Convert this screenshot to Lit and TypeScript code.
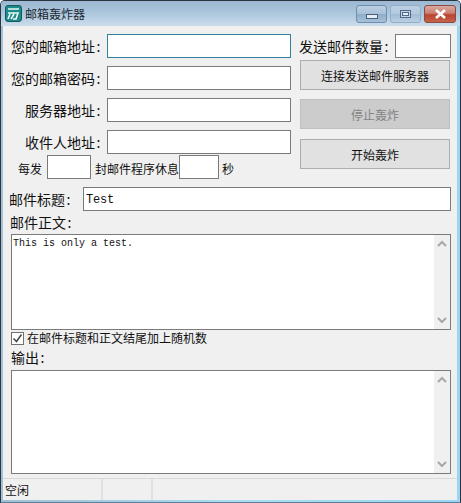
import { LitElement, html, css, svg } from "lit";
import { customElement } from "lit/decorators.js";

@customElement("app-root")
export class AppRoot extends LitElement {
  static styles = css`
    :host {
      display: block;
      width: 461px;
      height: 503px;
      font-family: "Noto Sans CJK SC", "Noto Sans", sans-serif;
      color: #111;
      background: #fff;
      overflow: hidden;
    }
    * { box-sizing: border-box; }
    .frame {
      width: 461px;
      height: 503px;
      display: flex;
      flex-direction: column;
      background: linear-gradient(90deg, #a3c0d6 0, #a9dcf2 50%, #9ad6f3 100%);
      border: 1px solid #2a3540;
      border-radius: 5px 5px 0 0;
      border-bottom-color: #5f7f95;
      padding: 0 3px 2px 2px;
      position: relative;
    }
    .title {
      height: 25px;
      flex: none;
      margin: 0 -3px 0 -2px;
      padding: 4px 4px 0 4px;
      display: flex;
      align-items: flex-start;
      background: linear-gradient(180deg, #9cb8d2 0, #aac5dc 45%, #cbddec 100%);
      border-radius: 4px 4px 0 0;
    }
    .title svg.logo { flex: none; width: 17px; height: 17px; }
    .title .name {
      font-size: 12px;
      line-height: 12px;
      margin: 3px 0 0 3px;
      color: #1c2730;
      flex: 1;
    }
    .wb {
      flex: none;
      height: 18px;
      border: 1px solid #6f8dad;
      border-radius: 3px;
      display: flex;
      align-items: center;
      justify-content: center;
      margin-left: 3px;
      background: linear-gradient(180deg, #bccfe2 0, #a8c1d9 48%, #8fadc9 52%, #a6c1d9 100%);
    }
    .wb.min { width: 31px; padding-top: 5px; }
    .wb.max { width: 31px; border-color: #94aec7; background: linear-gradient(180deg, #bcd0e2 0, #b2cadf 48%, #a2bcd4 52%, #b8d0e3 100%); }
    .wb.close {
      width: 32px;
      border-color: #8a4a40;
      background: linear-gradient(180deg, #d8a99f 0, #cb7f72 45%, #b9432f 55%, #c8634b 100%);
    }
    .content {
      flex: 1;
      background: #f0f0f0;
      padding: 8px 6px 0 8px;
      display: flex;
      flex-direction: column;
      min-height: 0;
    }
    .top { display: flex; height: 145px; flex: none; }
    .left { width: 280px; flex: none; display: flex; flex-direction: column; gap: 8px; }
    .right {
      margin-left: 8px;
      width: 152px;
      flex: none;
      display: flex;
      flex-direction: column;
    }
    .row { display: flex; align-items: center; height: 24px; flex: none; }
    .lbl {
      font-size: 14px;
      line-height: 16px;
      white-space: nowrap;
      padding-bottom: 1px;
    }
    .c { display: inline-block; width: 7px; text-align: center; }
    .left .lbl { width: 91px; text-align: right; margin-right: 5px; flex: none; }
    input[type="text"] {
      display: block;
      height: 24px;
      border: 1px solid #7a7a7a;
      background: #fff;
      padding: 0 2px;
      margin: 0;
      outline: none;
      border-radius: 0;
      min-width: 0;
    }
    .left input { flex: 1; }
    input.focus { border-color: #2f7f9d; }
    .small {
      margin-top: -7px;
      padding-left: 7px;
      font-size: 12px;
      line-height: 14px;
    }
    .small span { padding-top: 3px; }
    .small input { flex: none; }
    .small .n1 { width: 44px; margin: 0 4px 0 5px; }
    .small .n2 { width: 40px; margin-right: 3px; }
    .count .lbl { width: 96px; flex: none; }
    .count input { width: 56px; flex: none; }
    button {
      display: block;
      width: 150px;
      margin: 0 1px;
      flex: none;
      height: 30px;
      padding: 2px 0 0;
      border: 1px solid #adadad;
      background: #e1e1e1;
      color: #111;
      font: inherit;
      font-size: 12px;
      line-height: 14px;
    }
    button:disabled { background: #cccccc; border-color: #bfbfbf; color: #838383; }
    .b1 { margin-top: 2px; }
    .b2 { margin-top: 9px; }
    .b3 { margin-top: 10px; }
    .subject { margin-top: 8px; margin-left: -2px; }
    .subject .lbl { width: 74px; flex: none; }
    .subject input {
      flex: 1;
      margin-right: 0;
      font-family: "Liberation Mono", monospace;
      font-size: 12px;
      letter-spacing: -0.2px;
      color: #111;
      padding: 2px 0 0 2px;
    }
    .heading { font-size: 14px; line-height: 16px; height: 16px; flex: none; }
    .h1 { margin-top: 3px; margin-left: -1px; margin-bottom: 4px; }
    .box {
      flex: none;
      display: flex;
      border: 1px solid #7a7a7a;
      background: #fff;
    }
    .box.body { height: 96px; }
    .box.out { height: 104px; }
    .box .text {
      flex: 1;
      font-family: "Liberation Mono", monospace;
      font-size: 10px;
      line-height: 12px;
      padding: 3px 1px;
      color: #111;
      white-space: pre;
    }
    .sb {
      flex: none;
      width: 16px;
      background: #f0f0f0;
      display: flex;
      flex-direction: column;
      justify-content: space-between;
      align-items: center;
      padding: 5px 0;
    }
    .sb svg { display: block; width: 10px; height: 8px; }
    .check {
      flex: none;
      display: flex;
      align-items: center;
      height: 15px;
      margin-top: 1px;
      font-size: 12px;
      line-height: 14px;
    }
    .check .tx { position: relative; top: -1px; }
    .cb {
      width: 13px;
      height: 13px;
      flex: none;
      border: 1px solid #707070;
      background: #fff;
      margin-right: 3px;
      display: flex;
    }
    .cb svg { width: 11px; height: 11px; display: block; }
    .h2 { margin-top: 3px; margin-bottom: 5px; }
    .status {
      margin-top: 4px;
      margin-left: -8px;
      margin-right: -6px;
      flex: 1;
      border-top: 1px solid #d9d9d9;
      display: flex;
      font-size: 12px;
      line-height: 14px;
      align-items: stretch;
    }
    .status .c1 { width: 100px; flex: none; padding: 4px 0 0 2px; border-right: 2px solid #e0e0e0; }
    .status .c2 { width: 50px; flex: none; border-right: 2px solid #e0e0e0; }
  `;

  private up() {
    return svg`<svg viewBox="0 0 10 8"><path d="M1 6 L5 2 L9 6" fill="none" stroke="#a8a8a8" stroke-width="2"/></svg>`;
  }
  private down() {
    return svg`<svg viewBox="0 0 10 8"><path d="M1 2 L5 6 L9 2" fill="none" stroke="#a8a8a8" stroke-width="2"/></svg>`;
  }

  render() {
    const colon = html`<span class="c">:</span>`;
    return html`
      <div class="frame">
        <div class="title">
          <svg class="logo" viewBox="0 0 17 17">
            <rect x="0.5" y="0.5" width="16" height="16" rx="2.5" fill="#1f8a8c" stroke="#14595f"/>
            <path d="M3 4 H14 M3 8 H13 L11 14 H8 M5 9 L3 14 M9 9 L6 14" fill="none" stroke="#e9fbf6" stroke-width="1.6"/>
          </svg>
          <div class="name">邮箱轰炸器</div>
          <div class="wb min">
            <svg width="12" height="5" viewBox="0 0 12 5"><rect x="0.5" y="0.5" width="11" height="4" fill="#e8eef5" stroke="#4a6078"/></svg>
          </div>
          <div class="wb max">
            <svg width="11" height="8" viewBox="0 0 11 8"><rect x="0.5" y="0.5" width="10" height="7" fill="#c4d6e6" stroke="#4f6a86"/><rect x="2.5" y="2.5" width="6" height="3" fill="#e8eef5" stroke="#4f6a86" stroke-width="1"/></svg>
          </div>
          <div class="wb close">
            <svg width="13" height="10" viewBox="0 0 13 10"><path d="M2 1 L11 9 M11 1 L2 9" stroke="#fff" stroke-width="2.6"/></svg>
          </div>
        </div>
        <div class="content">
          <div class="top">
            <div class="left">
              <div class="row"><span class="lbl">您的邮箱地址${colon}</span><input class="focus" type="text" /></div>
              <div class="row"><span class="lbl">您的邮箱密码${colon}</span><input type="text" /></div>
              <div class="row"><span class="lbl">服务器地址${colon}</span><input type="text" /></div>
              <div class="row"><span class="lbl">收件人地址${colon}</span><input type="text" /></div>
              <div class="row small">
                <span>每发</span><input class="n1" type="text" /><span>封邮件程序休息</span><input class="n2" type="text" /><span>秒</span>
              </div>
            </div>
            <div class="right">
              <div class="row count"><span class="lbl">发送邮件数量${colon}</span><input type="text" /></div>
              <button class="b1">连接发送邮件服务器</button>
              <button class="b2" disabled>停止轰炸</button>
              <button class="b3">开始轰炸</button>
            </div>
          </div>
          <div class="row subject">
            <span class="lbl">邮件标题${colon}</span><input type="text" .value=${"Test"} />
          </div>
          <div class="heading h1">邮件正文${colon}</div>
          <div class="box body">
            <div class="text">This is only a test.</div>
            <div class="sb">${this.up()}${this.down()}</div>
          </div>
          <div class="check">
            <span class="cb"><svg viewBox="0 0 11 11"><path d="M1.5 5.5 L4.5 8.5 L9.5 1.5" fill="none" stroke="#444" stroke-width="1.5"/></svg></span>
            <span class="tx">在邮件标题和正文结尾加上随机数</span>
          </div>
          <div class="heading h2">输出${colon}</div>
          <div class="box out">
            <div class="text"></div>
            <div class="sb">${this.up()}${this.down()}</div>
          </div>
          <div class="status">
            <div class="c1">空闲</div>
            <div class="c2"></div>
          </div>
        </div>
      </div>
    `;
  }
}
